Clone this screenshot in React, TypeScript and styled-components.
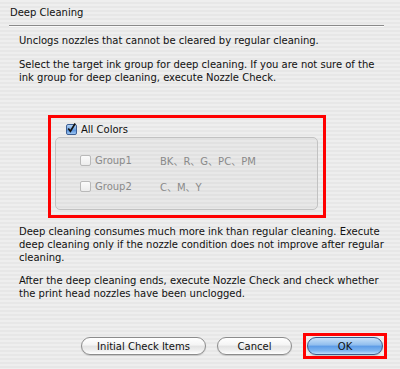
import styled, { createGlobalStyle } from "styled-components";

const GlobalStyle = createGlobalStyle`
  html, body {
    margin: 0;
    padding: 0;
  }
  body {
    font-family: "DejaVu Sans", "Noto Sans CJK JP", sans-serif;
    font-size: 10px;
    color: #111;
  }
`;

const Dialog = styled.div`
  width: 400px;
  height: 369px;
  box-sizing: border-box;
  padding-top: 6px;
  background: repeating-linear-gradient(
    to bottom,
    #eeeeee 0px,
    #eeeeee 2px,
    #e7e7e7 2px,
    #e7e7e7 4px
  );
  display: flex;
  flex-direction: column;
`;

const Title = styled.div`
  padding-left: 10px;
  line-height: 14px;
`;

const Divider = styled.div`
  margin: 5px 16px 0 9px;
  height: 1px;
  background: #8a8a8a;
  border-bottom: 1px solid #fafafa;
`;

const Para = styled.p<{ $top: number }>`
  margin: ${(p) => p.$top}px 0 0 19px;
  line-height: 13px;
  white-space: nowrap;
`;

const Highlight = styled.div`
  border: 3px solid #ff0000;
  box-sizing: border-box;
`;

const ColorSection = styled(Highlight)`
  margin: 31px 0 0 48px;
  width: 278px;
  height: 103px;
  padding: 5px 5px 0 4px;
  display: flex;
  flex-direction: column;
`;

const CheckRow = styled.label<{ $disabled?: boolean }>`
  display: flex;
  align-items: center;
  gap: 4px;
  height: 13px;
  color: ${(p) => (p.$disabled ? "#8a8a8a" : "#111")};
`;

const TopCheck = styled(CheckRow)`
  margin-left: 11px;
`;

const Box = styled.span<{ $checked?: boolean }>`
  width: 11px;
  height: 11px;
  box-sizing: border-box;
  border-radius: 2px;
  display: inline-flex;
  align-items: center;
  justify-content: center;
  border: 1px solid ${(p) => (p.$checked ? "#3d5f95" : "#b9b9b9")};
  background: ${(p) =>
    p.$checked
      ? "linear-gradient(#b6d3f3 0%, #6fa4e3 50%, #4e8ad9 51%, #9cc5f1 100%)"
      : "linear-gradient(#fbfbfb, #ececec)"};
`;

const GroupBox = styled.div`
  margin-top: 1px;
  flex: 1;
  margin-bottom: 5px;
  border: 1px solid #c2c2c2;
  border-radius: 5px;
  background: rgba(0, 0, 0, 0.025);
  padding: 15px 0 0 24px;
  display: flex;
  flex-direction: column;
  gap: 11px;
`;

const GroupRow = styled.div`
  display: grid;
  grid-template-columns: 80px auto;
  align-items: center;
  color: #8a8a8a;
`;

const ButtonRow = styled.div`
  margin: auto 13px 10px 0;
  display: flex;
  justify-content: flex-end;
  align-items: center;
  gap: 11px;
`;

const Button = styled.button<{ $width: number; $primary?: boolean }>`
  width: ${(p) => p.$width}px;
  height: 18px;
  border-radius: 9px;
  font-family: inherit;
  font-size: 10px;
  padding: 0;
  color: #111;
  border: 1px solid ${(p) => (p.$primary ? "#3a5a8a" : "#8c8c8c")};
  background: ${(p) =>
    p.$primary
      ? "linear-gradient(#c7e0f8 0%, #8fbdee 45%, #5c9be6 50%, #7fb6f0 80%, #bfe0fb 100%)"
      : "linear-gradient(#ffffff 0%, #f4f4f4 45%, #e2e2e2 50%, #f0f0f0 80%, #ffffff 100%)"};
  box-shadow: 0 1px 1px rgba(0, 0, 0, 0.15);
`;

const OkFrame = styled(Highlight)`
  width: 84px;
  height: 26px;
  display: flex;
  align-items: center;
  justify-content: center;
`;

const Check = () => (
  <svg width="11" height="12" viewBox="0 0 11 12" style={{ marginTop: -3 }}>
    <path d="M1.5 6.5 L4.2 10 L10 0.5" stroke="#111" strokeWidth="2" fill="none" />
  </svg>
);

const groups = [
  { name: "Group1", inks: "BK、R、G、PC、PM" },
  { name: "Group2", inks: "C、M、Y" },
];

export default function App() {
  return (
    <>
      <GlobalStyle />
      <Dialog>
        <Title>Deep Cleaning</Title>
        <Divider />
        <Para $top={7}>Unclogs nozzles that cannot be cleared by regular cleaning.</Para>
        <Para $top={11}>
          Select the target ink group for deep cleaning. If you are not sure of the
          <br />
          ink group for deep cleaning, execute Nozzle Check.
        </Para>
        <ColorSection>
          <TopCheck>
            <Box $checked>
              <Check />
            </Box>
            All Colors
          </TopCheck>
          <GroupBox>
            {groups.map((g) => (
              <GroupRow key={g.name}>
                <CheckRow $disabled>
                  <Box />
                  {g.name}
                </CheckRow>
                <span>{g.inks}</span>
              </GroupRow>
            ))}
          </GroupBox>
        </ColorSection>
        <Para $top={7}>
          Deep cleaning consumes much more ink than regular cleaning. Execute
          <br />
          deep cleaning only if the nozzle condition does not improve after regular
          <br />
          cleaning.
        </Para>
        <Para $top={10}>
          After the deep cleaning ends, execute Nozzle Check and check whether
          <br />
          the print head nozzles have been unclogged.
        </Para>
        <ButtonRow>
          <Button $width={125}>Initial Check Items</Button>
          <Button $width={75}>Cancel</Button>
          <OkFrame>
            <Button $width={76} $primary>
              OK
            </Button>
          </OkFrame>
        </ButtonRow>
      </Dialog>
    </>
  );
}
